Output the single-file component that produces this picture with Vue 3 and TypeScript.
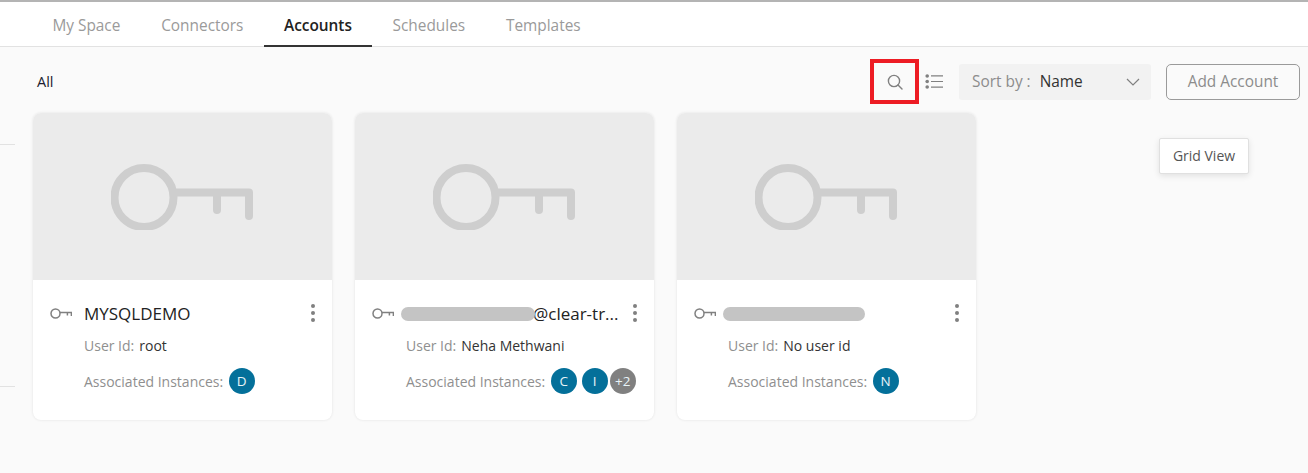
<script setup lang="ts">
interface Badge { label: string; grey?: boolean }
interface Card { name: string; blob?: number; suffix?: string; userId: string; badges: Badge[] }
const tabs: string[] = ['My Space', 'Connectors', 'Accounts', 'Schedules', 'Templates']
const cards: Card[] = [
  { name: 'MYSQLDEMO', userId: 'root', badges: [{ label: 'D' }] },
  { name: '', blob: 134, suffix: '@clear-tr...', userId: 'Neha Methwani', badges: [{ label: 'C' }, { label: 'I' }, { label: '+2', grey: true }] },
  { name: '', blob: 142, userId: 'No user id', badges: [{ label: 'N' }] },
]
</script>

<template>
  <div class="page">
    <nav class="tabs">
      <a v-for="t in tabs" :key="t" class="tab" :class="{ active: t === 'Accounts' }">{{ t }}</a>
    </nav>
    <div class="toolbar">
      <span class="all">All</span>
      <div class="tools">
        <span class="search">
          <svg width="16" height="16" viewBox="0 0 16 16" fill="none" stroke="#808080" stroke-width="1.4" stroke-linecap="round">
            <circle cx="7" cy="7" r="5.6" />
            <path d="M11 11 15 15" />
          </svg>
        </span>
        <svg class="list" width="18" height="15" viewBox="0 0 18 15" fill="#808080" stroke="#808080">
          <circle cx="2.2" cy="2" r="1.8" stroke="none" />
          <circle cx="2.2" cy="7.5" r="1.8" stroke="none" />
          <circle cx="2.2" cy="13" r="1.8" stroke="none" />
          <path d="M6 1.8H18M6 7.5H18M6 13.2H18" stroke-width="1.2" />
        </svg>
        <div class="sort">
          <span class="sort-label">Sort by :</span>
          <span class="sort-value">Name</span>
          <svg class="chev" width="14" height="8" viewBox="0 0 14 8" fill="none" stroke="#808080" stroke-width="1.2"><path d="M1 1l6 6 6-6" /></svg>
        </div>
        <button class="add">Add Account</button>
      </div>
    </div>
    <div class="content">
      <div class="rail"><i></i><i></i></div>
      <div class="cards">
        <article v-for="(c, i) in cards" :key="i" class="card">
          <div class="thumb">
            <svg width="146" height="66" viewBox="0 0 146 66" fill="none" stroke="#cecece" stroke-width="8" stroke-linecap="round" stroke-linejoin="round">
              <circle cx="33" cy="33.5" r="29.5" />
              <path d="M66 28.5H138V52M106 28.5V46" />
            </svg>
          </div>
          <div class="body">
            <div class="title">
              <svg class="mini" width="22" height="11" viewBox="0 0 22 11" fill="none" stroke="#808080" stroke-width="1.5">
                <circle cx="5.5" cy="5.5" r="4.5" />
                <path d="M10 4.6H21.4V8M17.4 4.6V7.4" />
              </svg>
              <span class="name">
                <span v-if="c.blob" class="blob" :style="{ width: c.blob + 'px' }"></span>{{ c.name }}{{ c.suffix }}
              </span>
              <span class="kebab"><b></b><b></b><b></b></span>
            </div>
            <div class="row"><span class="key">User Id:</span><span class="val">{{ c.userId }}</span></div>
            <div class="row inst">
              <span class="key">Associated Instances:</span>
              <span class="badges">
                <span v-for="b in c.badges" :key="b.label" class="badge" :class="{ grey: b.grey }">{{ b.label }}</span>
              </span>
            </div>
          </div>
        </article>
      </div>
    </div>
    <div class="tooltip">Grid View</div>
  </div>
</template>

<style>
html, body { margin: 0; background: #fafafa; }
</style>

<style scoped>
.page {
  position: relative;
  height: 473px;
  overflow: hidden;
  background: #fafafa;
  border-top: 2px solid #b4b4b4;
  box-sizing: border-box;
  font-family: "Open Sans", "Noto Sans", sans-serif;
  color: #333;
}
.tabs {
  display: flex;
  height: 44px;
  padding-left: 32px;
  background: #fff;
  border-bottom: 1px solid #e2e2e2;
}
.tab {
  padding: 0 20.4px;
  line-height: 47px;
  font-size: 15.4px;
  color: #9a9a9a;
  margin-bottom: -1px;
}
.active {
  color: #222;
  font-weight: 600;
  border-bottom: 2px solid #333;
  height: 43px;
  padding: 0 20.2px;
}
.toolbar {
  display: flex;
  justify-content: space-between;
  align-items: center;
  height: 70px;
  padding: 0 8px 0 37px;
}
.all { font-size: 14.5px; color: #1c1c30; margin-top: -2px; }
.tools { display: flex; align-items: center; margin-top: -1px; }
.search {
  width: 49px;
  height: 45px;
  box-sizing: border-box;
  border: 4px solid #ed1c24;
  display: flex;
  align-items: center;
  justify-content: center;
}
.list { margin-left: 6px; margin-right: 16px; }
.sort {
  width: 192px;
  height: 36px;
  box-sizing: border-box;
  background: #f2f2f2;
  border-radius: 3px;
  display: flex;
  align-items: center;
  padding: 0 11px 0 13px;
  font-size: 15.4px;
}
.sort-label { color: #8c8c8c; }
.sort-value { color: #333; margin-left: 9px; }
.chev { margin-left: auto; }
.add {
  width: 134px;
  height: 36px;
  margin-left: 15px;
  background: transparent;
  border: 1px solid #9a9a9a;
  border-radius: 5px;
  color: #8c8c8c;
  font: 15.4px "Open Sans", "Noto Sans", sans-serif;
}
.content { display: flex; }
.rail { width: 15px; margin-right: 18px; padding-top: 27px; }
.rail i { display: block; height: 1px; background: #e2e2e2; margin-bottom: 241px; }
.cards { display: flex; gap: 23px; margin-top: -4px; }
.card {
  width: 299px;
  height: 307px;
  background: #fff;
  border-radius: 8px;
  overflow: hidden;
  box-shadow: 0 0 3px rgba(0, 0, 0, .1);
}
.thumb {
  height: 167px;
  background: #ebebeb;
  display: flex;
  align-items: center;
  justify-content: center;
  padding-left: 2px;
  box-sizing: border-box;
}
.thumb svg { margin-top: 1px; }
.body { padding: 22px 17px 0 17px; }
.title { display: flex; align-items: center; height: 22px; }
.mini { flex: none; margin-right: 12px; }
.name {
  flex: 1;
  display: flex;
  align-items: center;
  font-size: 17px;
  font-weight: 500;
  color: #222;
  white-space: nowrap;
}
.blob {
  display: inline-block;
  height: 14px;
  background: #c4c4c4;
  border-radius: 7px;
  margin: 2px -2px 0 -5px;
  filter: blur(.5px);
}
.kebab { display: flex; flex-direction: column; gap: 3px; }
.kebab b { width: 4px; height: 4px; border-radius: 50%; background: #808080; }
.row {
  display: flex;
  align-items: center;
  margin-left: 34px;
  margin-top: 10px;
  font-size: 14px;
  height: 22px;
}
.inst { margin-top: 12px; height: 26px; }
.key { color: #8f8f8f; }
.val { color: #333; margin-left: 5px; }
.badges { display: flex; gap: 5px; margin-left: 5.5px; }
.badge {
  width: 26px;
  height: 26px;
  border-radius: 50%;
  background: #04709a;
  color: #e8f4f8;
  font-size: 13.5px;
  display: flex;
  align-items: center;
  justify-content: center;
}
.grey { background: #808080; margin-left: -3px; }
.tooltip {
  position: absolute;
  left: 1159px;
  top: 136px;
  width: 90px;
  height: 36px;
  box-sizing: border-box;
  padding-bottom: 2px;
  background: #fff;
  border: 1px solid #e0e0e0;
  border-radius: 2px;
  box-shadow: 0 2px 6px rgba(0, 0, 0, .1);
  font-size: 14px;
  color: #555;
  display: flex;
  align-items: center;
  justify-content: center;
}
</style>
